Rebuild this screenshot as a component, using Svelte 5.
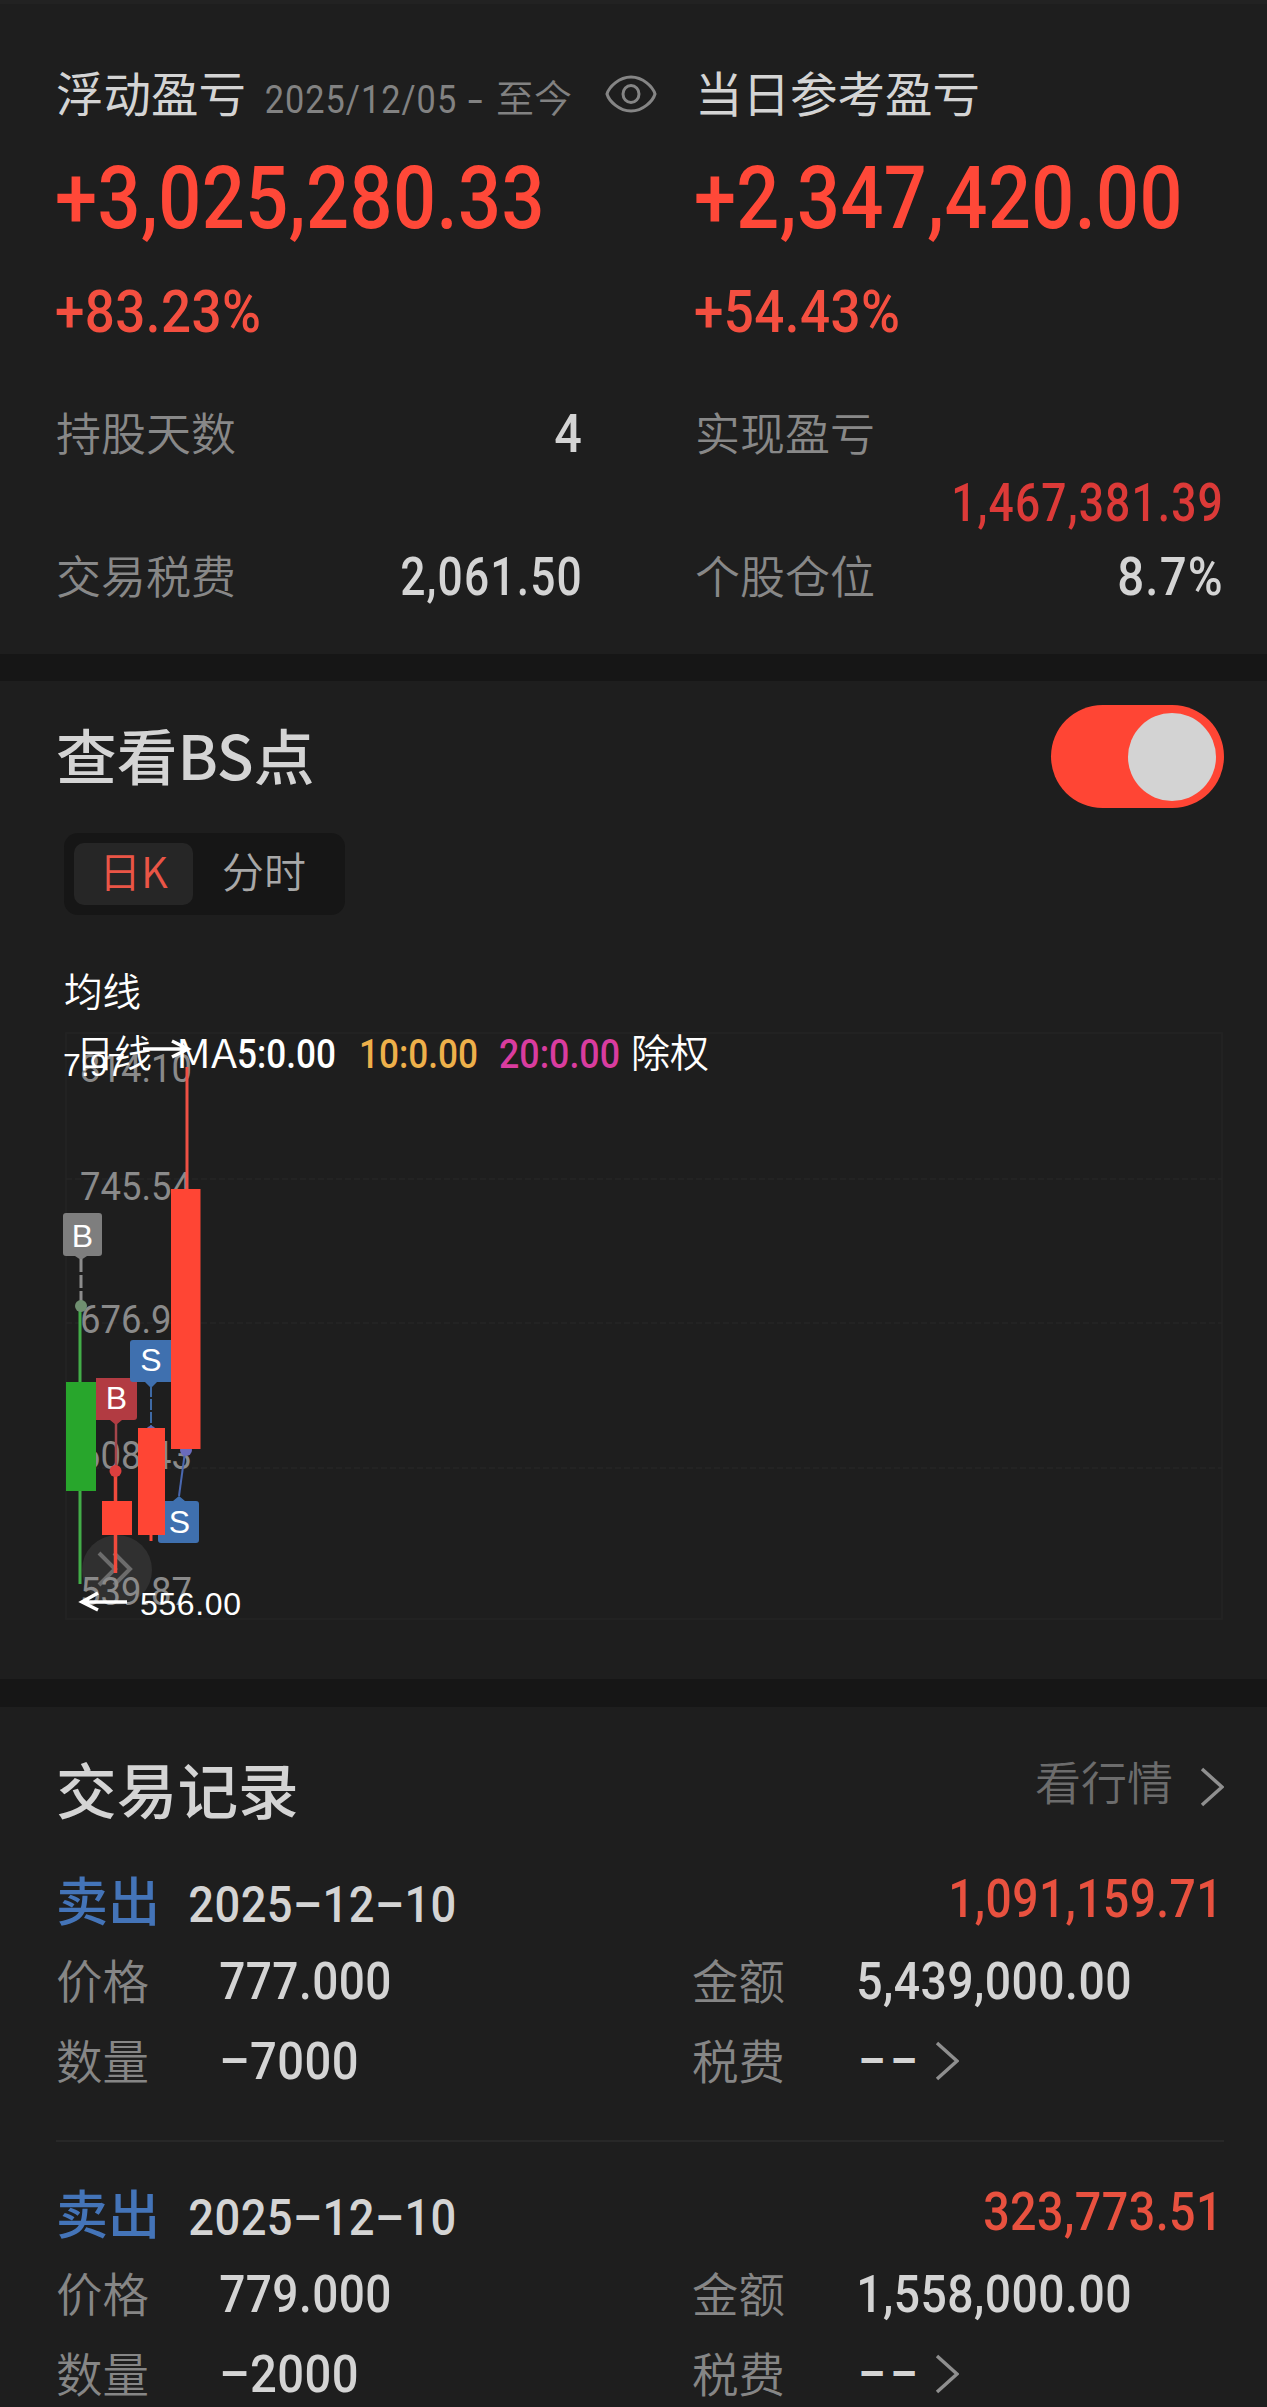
<script>
    const stats = {
        days: { label: '持股天数', value: '4', width: 24 },
        tax: { label: '交易税费', value: '2,061.50', width: 178 },
        realized: { label: '实现盈亏', value: '1,467,381.39', width: 268 },
        position: { label: '个股仓位', value: '8.7%', width: 102 }
    };

    const records = [
        {
            side: '卖出', date: '2025–12–10',
            profit: '1,091,159.71', profitWidth: 270,
            price: '777.000', qty: '–7000',
            amount: '5,439,000.00', amountWidth: 271
        },
        {
            side: '卖出', date: '2025–12–10',
            profit: '323,773.51', profitWidth: 235,
            price: '779.000', qty: '–2000',
            amount: '1,558,000.00', amountWidth: 271
        }
    ];

    // price axis, y = text baseline
    const axis = [
        { text: '814.10', y: 1082 },
        { text: '745.54', y: 1200 },
        { text: '676.98', y: 1333 },
        { text: '608.43', y: 1469 },
        { text: '539.87', y: 1605 }
    ];
    const gridLines = [1179, 1323, 1468];

    let showPoints = $state(true);
    let tab = $state('day');
</script>

<!-- condensed number; the box is exactly the width and cap height of the digits -->
{#snippet num(text, width, cap, weight = 500)}
    {@const size = cap / 0.711}
    {@const pad = size * 0.035}
    <svg class="num" {width} height={cap}>
        <text x={-pad} y={cap} font-size={size} font-weight={weight} textLength={width + pad * 2.6} lengthAdjust="spacingAndGlyphs">{text}</text>
    </svg>
{/snippet}

{#snippet chevron()}
    <svg class="chevron" width="24" height="40" viewBox="0 0 24 40">
        <path d="M2 2 L22 20 L2 38" />
    </svg>
{/snippet}

<main>
    <section class="summary">
        <div class="cols">
            <div>
                <div class="head">
                    <span class="title">浮动盈亏</span>
                    <span class="range">{@render num('2025/12/05', 189, 27.5, 400)}{@render num('-', 13, 27.5, 400)}<span>至今</span></span>
                    <svg class="eye" width="52" height="38" viewBox="0 0 52 38">
                        <path d="M2 19 C4 12 14 2 26 2 S48 12 50 19 C48 26 38 36 26 36 S4 26 2 19 Z" />
                        <ellipse cx="26" cy="19" rx="8" ry="8.5" />
                    </svg>
                </div>
                <div class="total">{@render num('+3,025,280.33', 482, 62)}</div>
                <div class="pct">{@render num('+83.23%', 201, 42)}</div>
            </div>
            <div>
                <div class="head"><span class="title">当日参考盈亏</span></div>
                <div class="total">{@render num('+2,347,420.00', 481, 62)}</div>
                <div class="pct">{@render num('+54.43%', 201, 42)}</div>
            </div>
        </div>
        <div class="cols stats">
            <div class="stat first">
                <span>{stats.days.label}</span>
                {@render num(stats.days.value, stats.days.width, 37.5)}
            </div>
            <div class="stat wrapped">
                <span>{stats.realized.label}</span>
                {@render num(stats.realized.value, stats.realized.width, 37.5)}
            </div>
            <div class="stat first">
                <span>{stats.tax.label}</span>
                {@render num(stats.tax.value, stats.tax.width, 37.5)}
            </div>
            <div class="stat">
                <span>{stats.position.label}</span>
                {@render num(stats.position.value, stats.position.width, 37.5)}
            </div>
        </div>
    </section>

    <section class="points">
        <div class="points-head">
            <h2>查看BS点</h2>
            <button class="toggle" class:on={showPoints} aria-label="查看BS点" onclick={() => (showPoints = !showPoints)}>
                <span class="knob"></span>
            </button>
        </div>
        <div class="tabs">
            <button class:active={tab === 'day'} onclick={() => (tab = 'day')}>日K</button>
            <button class="wide" class:active={tab === 'min'} onclick={() => (tab = 'min')}>分时</button>
        </div>
        <div class="ma-title">均线</div>

        <svg class="chart" width="1267" height="664" viewBox="0 1015 1267 664">
            <!-- grid -->
            <rect class="frame" x="66" y="1033" width="1156" height="586" />
            {#each gridLines as y}
                <line class="grid" x1="66" x2="1222" y1={y} y2={y} />
            {/each}

            <!-- expand button -->
            <circle cx="117" cy="1570" r="35" fill="#303030" />
            <g class="expand">
                <path d="M99 1553 L115 1569 L99 1585" />
                <path d="M114 1553 L130 1569 L114 1585" />
            </g>

            {#each axis as a}
                <text class="axis" x="80" y={a.y} textLength="112" lengthAdjust="spacingAndGlyphs">{a.text}</text>
            {/each}

            <!-- legend -->
            <text class="cjk" x="76" y="1067" font-size="38">日线</text>
            <text class="cjk" x="176" y="1067.5" font-size="40" textLength="61" lengthAdjust="spacingAndGlyphs">MA</text>
            <text class="ma" x="237" y="1067.5" fill="#fff" textLength="99" lengthAdjust="spacingAndGlyphs">5:0.00</text>
            <text class="ma" x="359" y="1067.5" fill="#eeb04a" textLength="119" lengthAdjust="spacingAndGlyphs">10:0.00</text>
            <text class="ma" x="499" y="1067.5" fill="#d93c9f" textLength="121" lengthAdjust="spacingAndGlyphs">20:0.00</text>
            <text class="cjk" x="631" y="1067" font-size="39">除权</text>
            <text class="mark" x="63" y="1076">7.97</text>
            <path class="arrow" d="M143 1049 H187 M172 1041 L188 1049 L172 1057" />

            <!-- 1st day -->
            <path d="M63 1216 q0 -3 3 -3 h33 q3 0 3 3 v37 q0 3 -3 3 h-12 l-6 4 l-6 -4 h-9 q-3 0 -3 -3 z" fill="#7e7e7e" />
            <text class="tag" x="82.5" y="1247">B</text>
            <line x1="81" x2="81" y1="1259" y2="1304" stroke="#8c8c8c" stroke-width="3" stroke-dasharray="13 3" />
            <line x1="80" x2="80" y1="1306" y2="1584" stroke="#42ad48" stroke-width="3" />
            <circle cx="81" cy="1306" r="6" fill="#6f8f70" />
            <rect x="66" y="1382" width="30" height="109" fill="#28a62c" />

            <!-- 2nd day -->
            <path d="M96 1378 h38 q3 0 3 3 v36 q0 3 -3 3 h-12 l-6 5 l-6 -5 h-14 z" fill="#b23b42" />
            <text class="tag" x="116.5" y="1409">B</text>
            <line x1="116" x2="116" y1="1424" y2="1468" stroke="#a5454b" stroke-width="2.5" />
            <line x1="115.5" x2="115.5" y1="1471" y2="1573" stroke="#f04a3c" stroke-width="3.5" />
            <circle cx="115.5" cy="1471" r="6" fill="#dc3f3e" />
            <rect x="102" y="1501" width="30" height="34" fill="#ff4534" />

            <!-- 3rd day -->
            <path d="M130 1343 q0 -3 3 -3 h38 v42 h-14 l-6 6 l-6 -6 h-12 q-3 0 -3 -3 z" fill="#3f70af" />
            <text class="tag" x="151" y="1371">S</text>
            <line x1="151" x2="151" y1="1386" y2="1428" stroke="#3f6aa5" stroke-width="2" stroke-dasharray="11 2" />
            <circle cx="151" cy="1431" r="5" fill="#6a6ab5" />

            <!-- 4th day -->
            <path d="M158 1504 q0 -3 3 -3 h12 l6 -5 l6 5 h11 q3 0 3 3 v36 q0 3 -3 3 h-35 q-3 0 -3 -3 z" fill="#3f70af" />
            <text class="tag" x="179.5" y="1533">S</text>
            <line x1="179" x2="185" y1="1496" y2="1452" stroke="#4a68b0" stroke-width="2" />
            <circle cx="186" cy="1450" r="6" fill="#6a6bbd" />
            <rect x="138" y="1428" width="27" height="107" fill="#ff4534" />
            <line x1="151" x2="151" y1="1535" y2="1541" stroke="#ff4534" stroke-width="3" />
            <line x1="187" x2="187" y1="1067" y2="1189" stroke="#ef5044" stroke-width="3" />
            <rect x="171" y="1189" width="29.5" height="260" fill="#ff4534" />

            <path class="arrow" d="M127 1602 H82 M98 1593 L82 1602 L98 1610" />
            <text class="mark" x="140" y="1615" textLength="101">556.00</text>
        </svg>
    </section>

    <section class="records">
        <div class="records-head">
            <h2>交易记录</h2>
            <div class="more"><span>看行情</span>{@render chevron()}</div>
        </div>
        {#each records as r}
            <article>
                <div class="record-top">
                    <span class="side">{r.side}</span>
                    {@render num(r.date, 264, 35.5)}
                    <span class="profit">{@render num(r.profit, r.profitWidth, 37.5)}</span>
                </div>
                <div class="record-row">
                    <span class="label">价格</span>
                    <div class="value">{@render num(r.price, 168, 37)}</div>
                    <span class="label">金额</span>
                    <div class="value">{@render num(r.amount, r.amountWidth, 37)}</div>
                </div>
                <div class="record-row">
                    <span class="label">数量</span>
                    <div class="value">{@render num(r.qty, 135, 37)}</div>
                    <span class="label">税费</span>
                    <div class="value fee">
                        {@render num('–', 23, 37)}{@render num('–', 23, 37)}
                        {@render chevron()}
                    </div>
                </div>
            </article>
        {/each}
    </section>
</main>

<style>
    :global(body) { margin: 0; background: #1e1e1e; }
    main {
        width: 1267px;
        height: 2407px;
        overflow: hidden;
        background: #1e1e1e;
        color: #d4d4d4;
        font-family: "Noto Sans CJK SC", sans-serif;
        font-weight: 350;
    }
    section { box-sizing: border-box; }
    h2 { margin: 0; font-size: 60.7px; font-weight: 500; }
    button { border: 0; padding: 0; font: inherit; cursor: pointer; }

    .num {
        display: block;
        flex: none;
        overflow: visible;
        fill: currentColor;
        font-family: Roboto, sans-serif;
        letter-spacing: 0.03em;
    }
    .chevron {
        display: block;
        fill: none;
        stroke: #8f8f8f;
        stroke-width: 3.5;
    }

    /* summary */
    .summary {
        height: 681px;
        padding: 58px 46px 0 56px;
        border-top: 4px solid #222;
        border-bottom: 27px solid #161616;
    }
    .cols { display: grid; grid-template-columns: 639px 1fr; }
    .head { display: flex; align-items: baseline; height: 60px; line-height: 60px; }
    .title { font-size: 47.5px; font-weight: 400; }
    .range { display: flex; align-items: baseline; gap: 14px; margin-left: 20px; font-size: 38px; color: #828282; }
    .eye { align-self: flex-start; margin: 13px 0 0 33px; fill: none; stroke: #858585; stroke-width: 3; }
    .total { margin: 44px 0 0 2px; color: #ff4838; }
    .pct { margin: 62px 0 0 1px; color: #f44f40; }
    .stats { margin-top: 70px; grid-template-rows: 143px 60px; }
    .stat { display: flex; align-items: baseline; justify-content: space-between; line-height: 60px; font-size: 45px; }
    .stat.first { margin-right: 115px; }
    .stat span { color: #888; }
    .wrapped { flex-direction: column; align-items: stretch; justify-content: flex-start; color: #dc3a38; }
    .wrapped :global(.num) { align-self: flex-end; margin-top: 21px; }

    /* chart */
    .points { height: 998px; padding-top: 24px; }
    .points-head {
        display: flex;
        justify-content: space-between;
        height: 103px;
        padding: 0 43px 0 56px;
        line-height: 97px;
    }
    .toggle { display: flex; width: 173px; height: 103px; padding: 8px; box-sizing: border-box; border-radius: 52px; background: #444; }
    .toggle.on { justify-content: flex-end; background: #ff4534; }
    .knob { width: 88px; height: 88px; border-radius: 50%; background: #d3d3d3; }
    .tabs {
        display: flex;
        width: 281px;
        height: 82px;
        box-sizing: border-box;
        margin: 25px 0 0 64px;
        padding: 10px;
        border-radius: 14px;
        background: #161616;
    }
    .tabs button { width: 119px; height: 62px; padding: 0 0 8px; border-radius: 10px; background: none; color: #a8a8a8; font-size: 42px; line-height: 54px; }
    .tabs .wide { flex: 1; }
    .tabs .active { background: #262626; color: #ea5546; }
    .ma-title { margin: 50px 0 0 64px; font-size: 38.5px; line-height: 48px; height: 50px; color: #fff; }

    .chart { display: block; }
    .frame { fill: none; stroke: #242424; stroke-width: 1.5; }
    .grid { stroke: #262626; stroke-width: 1.5; stroke-dasharray: 6 3; }
    .expand { fill: none; stroke: #6c6c6c; stroke-width: 4; }
    .axis { font: 400 39.5px Roboto, sans-serif; fill: #8a8a8a; }
    .cjk { fill: #fff; }
    .ma { font: 500 40px Roboto, sans-serif; }
    .mark { font: 400 32px "Liberation Sans", sans-serif; fill: #fff; }
    .tag { font: 400 32px "Liberation Sans", sans-serif; fill: #fff; text-anchor: middle; }
    .arrow { fill: none; stroke: #fff; stroke-width: 3.5; }

    /* records */
    .records { height: 728px; padding: 41px 43px 0 56px; border-top: 28px solid #161616; }
    .records-head { display: flex; justify-content: space-between; height: 80px; margin-bottom: 2px; line-height: 80px; }
    .more { display: flex; gap: 27px; height: 64px; line-height: 64px; font-size: 46px; color: #6c6c6c; }
    .more :global(.chevron) { margin-top: 19px; }
    article { padding: 39px 0 51px; border-bottom: 2px solid #282828; }
    article:last-child { border: 0; padding-bottom: 0; }
    article + article { padding-top: 40px; }
    .record-top { display: flex; align-items: baseline; height: 60px; line-height: 60px; }
    .side { width: 134px; font-size: 52px; font-weight: 500; color: #4474b8; }
    .profit { align-self: flex-start; margin: 10px 4px 0 auto; color: #e8513f; }
    .record-row {
        display: grid;
        grid-template-columns: 165px 471px 166px 1fr;
        align-items: baseline;
        height: 60px;
        margin-top: 20px;
        line-height: 60px;
    }
    .label { font-size: 46.5px; color: #868686; }
    .fee { display: flex; gap: 9px; padding-left: 2px; align-items: center; }
    .fee :global(.chevron) { margin-left: 11px; }
</style>
